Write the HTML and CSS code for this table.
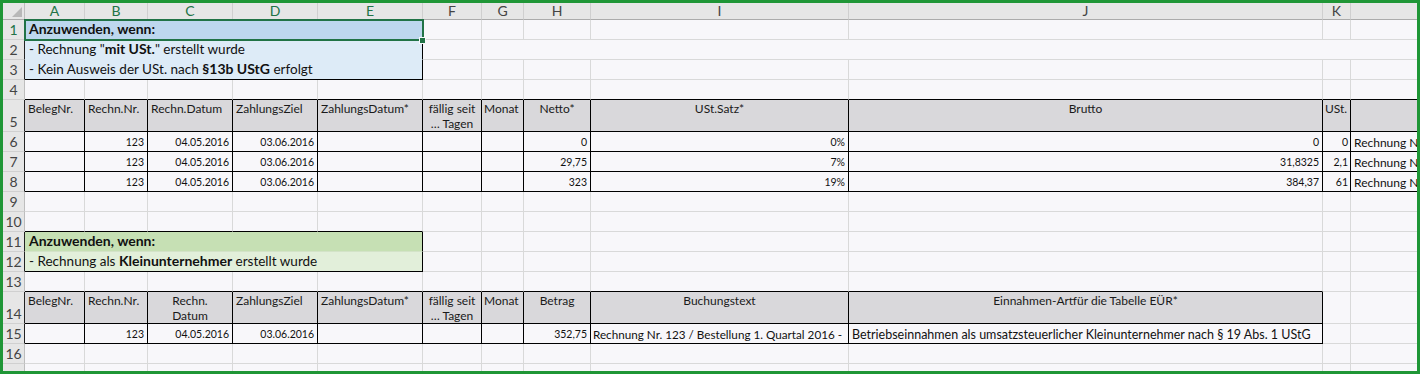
FILE: index.html
```html
<!DOCTYPE html>
<html lang="de">
<head>
<meta charset="utf-8">
<title>Rechnungen</title>
<link rel="stylesheet" href="styles.css">
</head>
<body>
<div class="frame">
  <div class="sheet">
    <!-- column headers -->
    <div class="corner"><svg width="10" height="10" viewBox="0 0 10 10"><polygon points="10,0 10,10 0,10" fill="#b8b8b8"/></svg></div>
    <div class="ch sel">A</div><div class="ch sel">B</div><div class="ch sel">C</div><div class="ch sel">D</div><div class="ch sel">E</div>
    <div class="ch">F</div><div class="ch">G</div><div class="ch">H</div><div class="ch">I</div><div class="ch">J</div><div class="ch">K</div><div class="ch"></div>

    <!-- row 1 -->
    <div class="rh sel bk">1</div>
    <div class="c note b1 span5 br"><span><b>Anzuwenden, wenn:</b></span></div>
    <div class="c"></div><div class="c"></div><div class="c"></div><div class="c"></div><div class="c"></div><div class="c"></div><div class="c"></div>

    <!-- row 2 -->
    <div class="rh bk">2</div>
    <div class="c note b2 span5 br"><span>- Rechnung "<b>mit USt.</b>" erstellt wurde</span></div>
    <div class="c"></div><div class="c span6"></div>

    <!-- row 3 -->
    <div class="rh bk">3</div>
    <div class="c note b2 span5 br bb"><span>- Kein Ausweis der USt. nach <b>§13b UStG</b> erfolgt</span></div>
    <div class="c"></div><div class="c"></div><div class="c"></div><div class="c"></div><div class="c"></div><div class="c"></div><div class="c"></div>

    <!-- row 4 -->
    <div class="rh">4</div>
    <div class="c bb"></div><div class="c bb"></div><div class="c bb"></div><div class="c bb"></div><div class="c bb"></div><div class="c bb"></div>
    <div class="c bb"></div><div class="c bb"></div><div class="c bb"></div><div class="c bb"></div><div class="c bb"></div><div class="c bb"></div>

    <!-- row 5 -->
    <div class="rh bk">5</div>
    <div class="c hd br bb"><span>BelegNr.</span></div>
    <div class="c hd br bb"><span>Rechn.Nr.</span></div>
    <div class="c hd br bb"><span>Rechn.Datum</span></div>
    <div class="c hd br bb"><span>ZahlungsZiel</span></div>
    <div class="c hd br bb"><span>ZahlungsDatum*</span></div>
    <div class="c hd br bb ctr tight"><span>fällig seit<br>… Tagen</span></div>
    <div class="c hd br bb tight"><span>Monat</span></div>
    <div class="c hd br bb ctr"><span>Netto*</span></div>
    <div class="c hd br bb ctr"><span>USt.Satz*</span></div>
    <div class="c hd br bb ctr"><span>Brutto</span></div>
    <div class="c hd br bb tight"><span>USt.</span></div>
    <div class="c hd br bb"></div>

    <!-- rows 6-8 -->
    <div class="rh bk">6</div>
    <div class="c br bb"></div><div class="c br bb r num">123</div><div class="c br bb r num">04.05.2016</div><div class="c br bb r num">03.06.2016</div><div class="c br bb"></div><div class="c br bb"></div><div class="c br bb"></div>
    <div class="c br bb r num">0</div><div class="c br bb r num">0%</div><div class="c br bb r num">0</div><div class="c br bb r num tight">0</div><div class="c br bb"><span>Rechnung Nr. 123</span></div>

    <div class="rh bk">7</div>
    <div class="c br bb"></div><div class="c br bb r num">123</div><div class="c br bb r num">04.05.2016</div><div class="c br bb r num">03.06.2016</div><div class="c br bb"></div><div class="c br bb"></div><div class="c br bb"></div>
    <div class="c br bb r num">29,75</div><div class="c br bb r num">7%</div><div class="c br bb r num">31,8325</div><div class="c br bb r num tight">2,1</div><div class="c br bb"><span>Rechnung Nr. 123</span></div>

    <div class="rh bk">8</div>
    <div class="c br bb"></div><div class="c br bb r num">123</div><div class="c br bb r num">04.05.2016</div><div class="c br bb r num">03.06.2016</div><div class="c br bb"></div><div class="c br bb"></div><div class="c br bb"></div>
    <div class="c br bb r num">323</div><div class="c br bb r num">19%</div><div class="c br bb r num">384,37</div><div class="c br bb r num tight">61</div><div class="c br bb"><span>Rechnung Nr. 123</span></div>

    <!-- row 9 -->
    <div class="rh">9</div>
    <div class="c"></div><div class="c"></div><div class="c"></div><div class="c"></div><div class="c"></div><div class="c"></div>
    <div class="c"></div><div class="c"></div><div class="c"></div><div class="c"></div><div class="c"></div><div class="c"></div>

    <!-- row 10 -->
    <div class="rh">10</div>
    <div class="c bb"></div><div class="c bb"></div><div class="c bb"></div><div class="c bb"></div><div class="c bb"></div><div class="c"></div>
    <div class="c"></div><div class="c"></div><div class="c"></div><div class="c"></div><div class="c"></div><div class="c"></div>

    <!-- row 11 -->
    <div class="rh bk">11</div>
    <div class="c note g1 span5 br"><span><b>Anzuwenden, wenn:</b></span></div>
    <div class="c"></div><div class="c"></div><div class="c"></div><div class="c"></div><div class="c"></div><div class="c"></div><div class="c"></div>

    <!-- row 12 -->
    <div class="rh bk">12</div>
    <div class="c note g2 span5 br bb"><span>- Rechnung als <b>Kleinunternehmer</b> erstellt wurde</span></div>
    <div class="c"></div><div class="c"></div><div class="c"></div><div class="c"></div><div class="c"></div><div class="c"></div><div class="c"></div>

    <!-- row 13 -->
    <div class="rh">13</div>
    <div class="c bb"></div><div class="c bb"></div><div class="c bb"></div><div class="c bb"></div><div class="c bb"></div><div class="c bb"></div>
    <div class="c bb"></div><div class="c bb"></div><div class="c bb"></div><div class="c bb"></div><div class="c"></div><div class="c"></div>

    <!-- row 14 -->
    <div class="rh bk">14</div>
    <div class="c hd br bb"><span>BelegNr.</span></div>
    <div class="c hd br bb"><span>Rechn.Nr.</span></div>
    <div class="c hd br bb ctr"><span>Rechn.<br>Datum</span></div>
    <div class="c hd br bb"><span>ZahlungsZiel</span></div>
    <div class="c hd br bb"><span>ZahlungsDatum*</span></div>
    <div class="c hd br bb ctr tight"><span>fällig seit<br>… Tagen</span></div>
    <div class="c hd br bb tight"><span>Monat</span></div>
    <div class="c hd br bb ctr"><span>Betrag</span></div>
    <div class="c hd br bb ctr"><span>Buchungstext</span></div>
    <div class="c hd br bb ctr"><span>Einnahmen-Artfür die Tabelle EÜR*</span></div>
    <div class="c"></div><div class="c"></div>

    <!-- row 15 -->
    <div class="rh bk">15</div>
    <div class="c br bb"></div><div class="c br bb r num">123</div><div class="c br bb r num">04.05.2016</div><div class="c br bb r num">03.06.2016</div><div class="c br bb"></div><div class="c br bb"></div><div class="c br bb"></div>
    <div class="c br bb r num">352,75</div>
    <div class="c br bb narrow"><span>Rechnung Nr. 123 / Bestellung 1. Quartal 2016 -</span></div>
    <div class="c br bb wide"><span>Betriebseinnahmen als umsatzsteuerlicher Kleinunternehmer nach § 19 Abs. 1 UStG</span></div>
    <div class="c"></div><div class="c"></div>

    <!-- row 16 -->
    <div class="rh">16</div>
    <div class="c"></div><div class="c"></div><div class="c"></div><div class="c"></div><div class="c"></div><div class="c"></div>
    <div class="c"></div><div class="c"></div><div class="c"></div><div class="c"></div><div class="c"></div><div class="c"></div>

    <!-- row 17 (partly visible) -->
    <div class="rh"></div>
    <div class="c"></div><div class="c"></div><div class="c"></div><div class="c"></div><div class="c"></div><div class="c"></div>
    <div class="c"></div><div class="c"></div><div class="c"></div><div class="c"></div><div class="c"></div><div class="c"></div>

    <div class="selection"></div>
    <div class="handle"></div>
  </div>
</div>
</body>
</html>
```

FILE: styles.css
```css
* { box-sizing: border-box; margin: 0; padding: 0; }
html, body { width: 1420px; height: 374px; overflow: hidden; background: #f8f7fa; }
body { font-family: Lato, "Liberation Sans", sans-serif; color: #111; }

.frame {
  width: 1420px;
  height: 374px;
  border: 3px solid #1f9636;
  overflow: hidden;
  background: #f8f7fa;
}

.sheet {
  position: relative;
  display: grid;
  width: max-content;
  grid-template-columns: 22px 60px 63px 85px 85px 105px 59px 42px 67px 258px 474px 28px 90px;
  grid-template-rows: 17px 20px 20px 20px 20px 32px 20px 20px 20px 20px 20px 20px 20px 20px 32px 20px 20px 20px;
}

/* headers */
.corner {
  background: #e6e6e6;
  border-right: 1px solid #bdbdbd;
  border-bottom: 1px solid #ababab;
  display: flex;
  align-items: flex-end;
  justify-content: flex-end;
  padding: 0 2px 2px 0;
}
.ch {
  background: #e6e6e6;
  border-right: 1px solid #cfcfcf;
  border-bottom: 1px solid #ababab;
  font-size: 14px;
  color: #444;
  display: flex;
  align-items: center;
  justify-content: center;
  line-height: 16px;
}
.rh {
  background: #e6e6e6;
  border-right: 1px solid #bdbdbd;
  border-bottom: 1px solid #d0d0d0;
  font-size: 14px;
  color: #444;
  display: flex;
  align-items: flex-end;
  justify-content: center;
  line-height: 17px;
  padding-bottom: 1px;
}
.rh.bk { border-right-color: #222; }
.sel { color: #217346; }

/* cells */
.c {
  border-right: 1px solid #d9d9d9;
  border-bottom: 1px solid #d9d9d9;
  font-size: 12px;
  line-height: 15px;
  display: flex;
  align-items: flex-end;
  padding: 0 3px 1px 3px;
  white-space: nowrap;
  overflow: hidden;
  min-width: 0;
}
.num { font-size: 10.5px; line-height: 14px; padding-bottom: 2px; }
.narrow { font-size: 11.7px; padding-left: 2px; }
.wide { font-size: 12.5px; }
.tight { padding-left: 2px; padding-right: 2px; }
.span5 { grid-column: span 5; }
.span6 { grid-column: span 6; }
.r { justify-content: flex-end; }
.ctr { justify-content: center; text-align: center; }

.br { border-right-color: #000; }
.bb { border-bottom-color: #000; }

.note { font-size: 13.5px; line-height: 17px; padding-left: 4px; padding-bottom: 1px; }
.note b { font-size: 14px; }

.b1 { background: #bdd7ee; border-bottom-color: #bdd7ee; }
.b2 { background: #ddebf7; border-bottom-color: #ddebf7; }
.g1 { background: #c6e0b4; border-bottom-color: #d3e3c8; }
.g2 { background: #e2efda; }
.b2.bb, .g2.bb { border-bottom-color: #000; }

.hd {
  background: #d9d8db;
  align-items: flex-start;
  padding-top: 1px;
  line-height: 15px;
  color: #1a1a1a;
}

/* selection overlay */
.selection {
  position: absolute;
  left: 21px;
  top: 16px;
  width: 400px;
  height: 22px;
  border: 2px solid #217346;
  pointer-events: none;
}
.handle {
  position: absolute;
  left: 416px;
  top: 34px;
  width: 7px;
  height: 7px;
  background: #217346;
  border: 1px solid #f8f7fa;
}
```
